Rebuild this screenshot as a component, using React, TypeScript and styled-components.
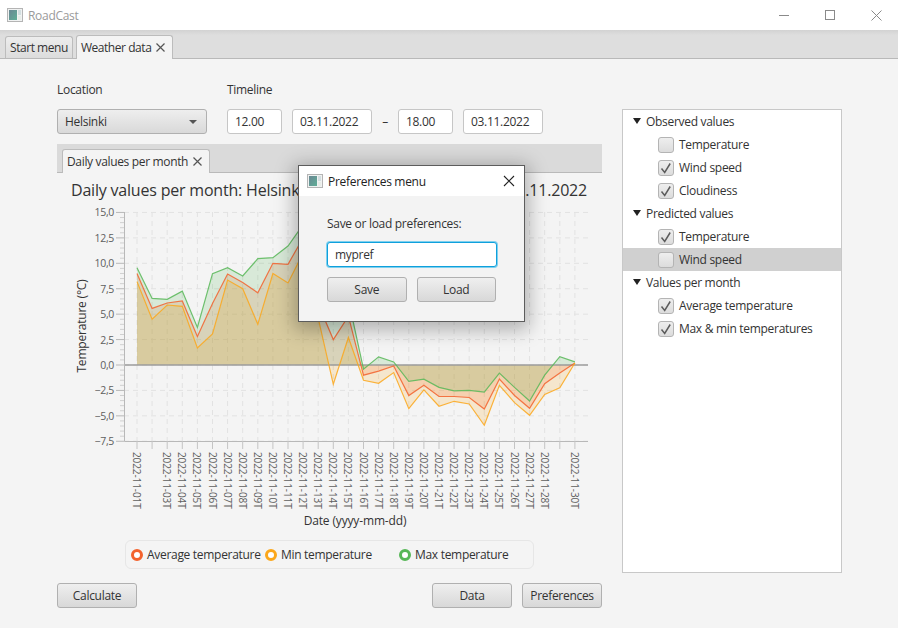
import React from "react";
import styled, { createGlobalStyle } from "styled-components";

const Global = createGlobalStyle`
  html, body { margin: 0; padding: 0; background: #f4f4f4; }
  * { box-sizing: border-box; }
`;

const FONT = `"Open Sans", "Noto Sans", "Liberation Sans", sans-serif`;

const Win = styled.div`
  width: 898px;
  height: 628px;
  position: relative;
  overflow: hidden;
  background: #f4f4f4;
  font-family: ${FONT};
  font-size: 12px;
  letter-spacing: -0.3px;
  color: #333;
`;
const TitleBar = styled.div`
  height: 30px;
  background: #fff;
  display: flex;
  align-items: center;
  padding-left: 7px;
  gap: 5px;
  color: #9a9a9a;
`;
const WinControls = styled.div`
  margin-left: auto;
  margin-right: -1px;
  display: flex;
  align-items: center;
  color: #8a8a8a;
`;
const WinBtn = styled.span`
  width: 46px;
  height: 30px;
  display: flex;
  align-items: center;
  justify-content: center;
`;
const TabBar = styled.div<{ $inner?: boolean }>`
  height: 29px;
  background: ${(p) => (p.$inner ? "#dadada" : "linear-gradient(#d2d2d2 0, #dedede 5px, #dedede 100%)")};
  border-bottom: 1px solid #b9b9b9;
  display: flex;
  align-items: flex-end;
  padding-left: 5px;
  gap: 3px;
  letter-spacing: ${(p) => (p.$inner ? "-0.34px" : "-0.45px")};
`;
const Tab = styled.div<{ $selected?: boolean }>`
  height: ${(p) => (p.$selected ? 24 : 23)}px;
  margin-bottom: -1px;
  padding: 0 4px;
  display: flex;
  align-items: center;
  gap: 5px;
  border: 1px solid #bcbcbc;
  border-bottom: ${(p) => (p.$selected ? "none" : "1px solid #b9b9b9")};
  border-radius: 3px 3px 0 0;
  background: ${(p) => (p.$selected ? "#f4f4f4" : "linear-gradient(#ededed, #dcdcdc)")};
  white-space: nowrap;
`;
const Content = styled.div`
  display: flex;
  align-items: flex-start;
  gap: 20px;
  padding: 23px 0 0 57px;
`;
const LeftCol = styled.div`
  width: 545px;
`;
const Form = styled.div`
  display: flex;
  gap: 20px;
  margin-bottom: 10px;
`;
const Field = styled.div`
  display: flex;
  flex-direction: column;
  gap: 11px;
`;
const FieldLabel = styled.div`
  height: 16px;
  line-height: 16px;
`;
const Fields = styled.div`
  display: flex;
  align-items: center;
  gap: 10px;
`;
const Dash = styled.span`
  width: 6px;
  display: flex;
  justify-content: center;
`;
const Select = styled.div`
  width: 150px;
  height: 25px;
  padding: 0 8px 0 7px;
  display: flex;
  align-items: center;
  justify-content: space-between;
  border: 1px solid #b0b0b0;
  border-radius: 3px;
  background: linear-gradient(#eeeeee, #d9d9d9);
`;
const Caret = styled.span`
  width: 0;
  height: 0;
  margin-right: 1px;
  border-left: 4px solid transparent;
  border-right: 4px solid transparent;
  border-top: 4px solid #555;
`;
const Input = styled.div<{ $w: number; $focus?: boolean }>`
  width: ${(p) => p.$w}px;
  height: 25px;
  padding: 0 7px;
  display: flex;
  align-items: center;
  background: #fff;
  border: 1px solid ${(p) => (p.$focus ? "#0fa0dc" : "#c6c6c6")};
  border-radius: 3px;
  box-shadow: ${(p) => (p.$focus ? "0 0 0 1px #7fd0ee" : "none")};
`;
const ChartTitle = styled.div`
  height: 30px;
  padding: 4px 15px 0 14px;
  line-height: 26px;
  display: flex;
  justify-content: space-between;
  font-size: 16px;
  letter-spacing: -0.2px;
  white-space: nowrap;
`;
const Plot = styled.svg`
  display: block;
  width: 545px;
  height: 337px;
  text {
    font-family: ${FONT};
  }
`;
const Legend = styled.div`
  width: 409px;
  height: 29px;
  margin-left: 68px;
  display: flex;
  align-items: center;
  padding-left: 5px;
  border: 1px solid #e6e6e6;
  border-radius: 6px;
`;
const LegendItem = styled.div<{ $w: number }>`
  width: ${(p) => p.$w}px;
  display: flex;
  align-items: center;
  gap: 4px;
`;
const Dot = styled.span<{ $c: string }>`
  width: 12px;
  height: 12px;
  border-radius: 50%;
  border: 3px solid ${(p) => p.$c};
  background: #fff;
`;
const Actions = styled.div`
  display: flex;
  gap: 10px;
  margin-top: 14px;
`;
const Button = styled.div<{ $push?: boolean }>`
  width: 80px;
  height: 25px;
  margin-right: ${(p) => (p.$push ? "auto" : "0")};
  display: flex;
  align-items: center;
  justify-content: center;
  border: 1px solid #b0b0b0;
  border-radius: 3px;
  background: linear-gradient(#efefef, #d8d8d8);
`;
const Tree = styled.div`
  width: 220px;
  height: 464px;
  margin-top: 27px;
  background: #fff;
  border: 1px solid #c8c8c8;
`;
const Row = styled.div<{ $leaf?: boolean; $selected?: boolean }>`
  height: 23px;
  display: flex;
  align-items: center;
  padding-left: ${(p) => (p.$leaf ? 35 : 10)}px;
  gap: 5px;
  background: ${(p) => (p.$selected ? "#d0d0d0" : "transparent")};
`;
const Arrow = styled.span`
  width: 0;
  height: 0;
  margin-top: -1px;
  border-left: 4.5px solid transparent;
  border-right: 4.5px solid transparent;
  border-top: 6px solid #222;
`;
const Check = styled.span`
  width: 16px;
  height: 16px;
  flex: none;
  display: flex;
  border: 1px solid #b4b4b4;
  border-radius: 3px;
  background: linear-gradient(#eeeeee, #dcdcdc);
`;
const Dialog = styled.div`
  position: absolute;
  left: 298px;
  top: 165px;
  width: 227px;
  height: 157px;
  background: #f3f3f3;
  border: 1px solid #5c5c5c;
  box-shadow: 0 4px 18px 4px rgba(0, 0, 0, 0.28);
`;
const DialogHead = styled.div`
  height: 30px;
  background: #fff;
  display: flex;
  align-items: center;
  padding: 0 9px 0 8px;
  gap: 5px;
  color: #222;
`;
const DialogBody = styled.div`
  padding: 20px 28px;
  display: flex;
  flex-direction: column;
`;
const DialogLabel = styled.div`
  height: 16px;
  line-height: 16px;
  margin-bottom: 10px;
`;
const DialogButtons = styled.div`
  display: flex;
  gap: 10px;
  margin-top: 10px;
`;
const CloseBtn = styled.span`
  margin-left: auto;
  display: flex;
`;
const TabCloseBox = styled.span`
  display: flex;
  margin-right: 3px;
`;

const AppIcon = () => (
  <svg width="16" height="16" viewBox="0 0 16 16">
    <defs>
      <linearGradient id="ai" x1="0" y1="0" x2="1" y2="1">
        <stop offset="0" stopColor="#6a8793" />
        <stop offset="1" stopColor="#5fae97" />
      </linearGradient>
    </defs>
    <rect x="0.5" y="1.5" width="15" height="13" fill="#f0f2f2" stroke="#b4b4b4" />
    <rect x="2" y="3" width="8" height="10" fill="url(#ai)" />
    <rect x="11" y="3" width="3" height="5" fill="#d2dee0" />
    <rect x="11" y="9" width="3" height="4" fill="#e8ede8" />
  </svg>
);

const TabClose = () => (
  <TabCloseBox>
    <svg width="9" height="9" viewBox="0 0 9 9">
      <path d="M0.5 0.5L8.5 8.5M8.5 0.5L0.5 8.5" stroke="#555" strokeWidth="1.2" fill="none" />
    </svg>
  </TabCloseBox>
);

const Tick = () => (
  <svg width="14" height="14" viewBox="0 0 14 14">
    <path d="M2.5 7.5L5.7 11.5L11.2 2.5" stroke="#5c5c5c" strokeWidth="1.5" fill="none" />
  </svg>
);

const days = Array.from({ length: 30 }, (_, i) => i);
const xOf = (i: number) => 137 + i * 15.1;
const yOf = (v: number) => 365 - v * 10.17;

const avg = [9.0, 5.57, 6.1, 6.3, 2.8, 6.05, 8.95, 8.1, 7.1, 10.0, 9.9, 12.5, 6.0, 2.5, 4.8, -1.0, -0.6, -0.1, -3.0, -2.0, -3.1, -3.1, -3.2, -4.33, -1.38, -3.0, -4.26, -1.84, -0.8, 0.2];
const min = [8.2, 4.5, 5.9, 5.77, 1.67, 3.05, 8.35, 7.5, 4.0, 9.0, 8.06, 11.0, 4.6, -1.9, 2.7, -1.5, -1.8, -0.75, -4.3, -2.45, -4.05, -3.57, -3.83, -5.93, -2.0, -3.7, -4.95, -2.9, -2.23, 0.2];
const max = [9.57, 6.55, 6.45, 7.27, 3.7, 8.98, 9.57, 8.75, 10.45, 10.55, 11.7, 13.8, 12.5, 6.4, 6.4, -0.4, 0.8, 0.3, -1.6, -1.4, -2.2, -2.55, -2.5, -2.65, -0.8, -2.2, -3.54, -1.0, 0.82, 0.3];

const series = [
  { c: "#f3622d", d: avg },
  { c: "#fba71b", d: min },
  { c: "#57b757", d: max },
];

const linePts = (d: number[]) => d.map((v, i) => `${xOf(i).toFixed(1)},${yOf(v).toFixed(1)}`).join(" ");
const majors = [15, 12.5, 10, 7.5, 5, 2.5, 0, -2.5, -5, -7.5];
const fmt = (v: number) => (v < 0 ? "\u2212" : "") + Math.abs(v).toFixed(1).replace(".", ",");
const minors: number[] = [];
for (let v = -7.5; v < 15; v += 0.5) if (Math.abs((v / 2.5) % 1) > 0.01) minors.push(v);

const Chart = () => (
  <Plot viewBox="57 203 545 337">
    {majors.map((v) => (
      <line key={v} x1={124} x2={588} y1={yOf(v)} y2={yOf(v)} stroke="#e2e2e2" strokeWidth="1" strokeDasharray="5 4" />
    ))}
    {days.map((i) => (
      <line key={i} x1={xOf(i)} x2={xOf(i)} y1={212} y2={441} stroke="#e2e2e2" strokeWidth="1" strokeDasharray="5 4" />
    ))}
    {series.map((s) => (
      <polygon key={s.c} points={`${xOf(0)},365 ${linePts(s.d)} ${xOf(29)},365`} fill={s.c} fillOpacity="0.18" />
    ))}
    <line x1={124} x2={588} y1={365} y2={365} stroke="#9c9c9c" strokeWidth="1.6" />
    {series.map((s) => (
      <polyline key={s.c} points={linePts(s.d)} fill="none" stroke={s.c} strokeOpacity="0.85" strokeWidth="1.2" />
    ))}
    <path d="M124.5 212V441.5H588" fill="none" stroke="#b8b8b8" />
    {majors.map((v) => (
      <g key={v}>
        <line x1={116} x2={124} y1={yOf(v)} y2={yOf(v)} stroke="#b8b8b8" />
        <text x={114} y={yOf(v) + 4} textAnchor="end" fontSize="10.5" letterSpacing="-0.3" fill="#5e5e5e">{fmt(v)}</text>
      </g>
    ))}
    {minors.map((v) => (
      <line key={v} x1={120} x2={124} y1={yOf(v)} y2={yOf(v)} stroke="#d0d0d0" />
    ))}
    {days.map((i) => (
      <line key={i} x1={xOf(i)} x2={xOf(i)} y1={441} y2={449} stroke="#c4c4c4" />
    ))}
    {days
      .filter((i) => i !== 1 && i !== 28)
      .map((i) => (
        <text
          key={i}
          transform={`translate(${xOf(i) - 4} 452) rotate(90)`}
          fontSize="10"
          letterSpacing="-0.1"
          fill="#5e5e5e"
        >
          {`2022-11-${String(i + 1).padStart(2, "0")}T`}
        </text>
      ))}
    <text transform="translate(86 326) rotate(-90)" textAnchor="middle" fontSize="12" letterSpacing="-0.2" fill="#333">
      Temperature (°C)
    </text>
    <text x={355} y={525} textAnchor="middle" fontSize="12" letterSpacing="-0.15" fill="#333">
      Date (yyyy-mm-dd)
    </text>
  </Plot>
);

type Item = { label: string; head?: boolean; checked?: boolean; selected?: boolean };
const treeItems: Item[] = [
  { label: "Observed values", head: true },
  { label: "Temperature" },
  { label: "Wind speed", checked: true },
  { label: "Cloudiness", checked: true },
  { label: "Predicted values", head: true },
  { label: "Temperature", checked: true },
  { label: "Wind speed", selected: true },
  { label: "Values per month", head: true },
  { label: "Average temperature", checked: true },
  { label: "Max & min temperatures", checked: true },
];

export default function App() {
  return (
    <Win>
      <Global />
      <TitleBar>
        <AppIcon />
        <span>RoadCast</span>
        <WinControls>
          <WinBtn>
            <svg width="11" height="11" viewBox="0 0 11 11"><path d="M0 5.5H10" stroke="currentColor" /></svg>
          </WinBtn>
          <WinBtn>
            <svg width="11" height="11" viewBox="0 0 11 11"><rect x="0.5" y="0.5" width="9" height="9" fill="none" stroke="currentColor" /></svg>
          </WinBtn>
          <WinBtn>
            <svg width="11" height="11" viewBox="0 0 11 11"><path d="M0.5 0.5L10.5 10.5M10.5 0.5L0.5 10.5" stroke="currentColor" fill="none" /></svg>
          </WinBtn>
        </WinControls>
      </TitleBar>
      <TabBar>
        <Tab>Start menu</Tab>
        <Tab $selected>Weather data <TabClose /></Tab>
      </TabBar>
      <Content>
        <LeftCol>
          <Form>
            <Field>
              <FieldLabel>Location</FieldLabel>
              <Select>Helsinki<Caret /></Select>
            </Field>
            <Field>
              <FieldLabel>Timeline</FieldLabel>
              <Fields>
                <Input $w={55}>12.00</Input>
                <Input $w={80}>03.11.2022</Input>
                <Dash>–</Dash>
                <Input $w={55}>18.00</Input>
                <Input $w={80}>03.11.2022</Input>
              </Fields>
            </Field>
          </Form>
          <TabBar $inner>
            <Tab $selected>Daily values per month <TabClose /></Tab>
          </TabBar>
          <ChartTitle>
            <span>Daily values per month: Helsinki</span>
            <span>03.11.2022</span>
          </ChartTitle>
          <Chart />
          <Legend>
            <LegendItem $w={134}><Dot $c="#f3622d" />Average temperature</LegendItem>
            <LegendItem $w={134}><Dot $c="#fba71b" />Min temperature</LegendItem>
            <LegendItem $w={130}><Dot $c="#57b757" />Max temperature</LegendItem>
          </Legend>
          <Actions>
            <Button $push>Calculate</Button>
            <Button>Data</Button>
            <Button>Preferences</Button>
          </Actions>
        </LeftCol>
        <Tree>
          {treeItems.map((it, i) =>
            it.head ? (
              <Row key={i}><Arrow />{it.label}</Row>
            ) : (
              <Row key={i} $leaf $selected={it.selected}>
                <Check>{it.checked && <Tick />}</Check>
                {it.label}
              </Row>
            )
          )}
        </Tree>
      </Content>
      <Dialog>
        <DialogHead>
          <AppIcon />
          <span>Preferences menu</span>
          <CloseBtn>
            <svg width="12" height="12" viewBox="0 0 12 12"><path d="M1 1L11 11M11 1L1 11" stroke="#222" strokeWidth="1.1" fill="none" /></svg>
          </CloseBtn>
        </DialogHead>
        <DialogBody>
          <DialogLabel>Save or load preferences:</DialogLabel>
          <Input $w={170} $focus>mypref</Input>
          <DialogButtons>
            <Button>Save</Button>
            <Button>Load</Button>
          </DialogButtons>
        </DialogBody>
      </Dialog>
    </Win>
  );
}
